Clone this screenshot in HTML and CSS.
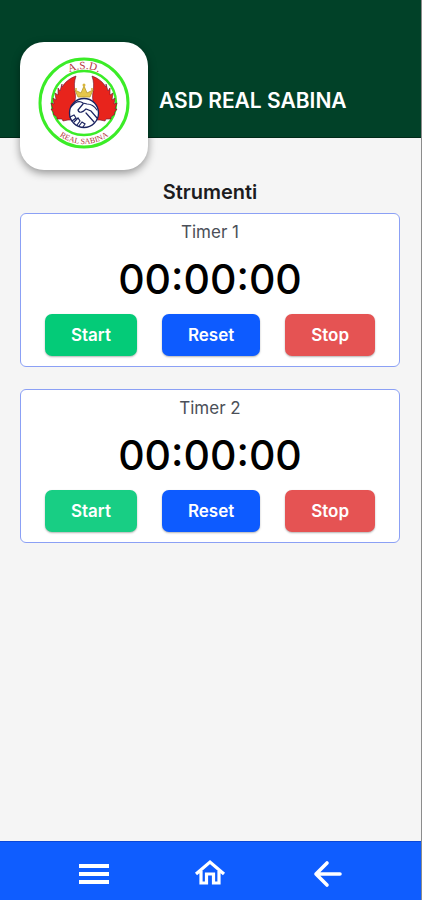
FILE: index.html
```html
<!DOCTYPE html>
<html lang="it">
<head>
    <meta charset="UTF-8">
    <meta name="viewport" content="width=device-width, initial-scale=1.0">
    <title>ASD Real Sabina - Strumenti</title>
    <link rel="stylesheet" href="styles.css">
</head>
<body>

    <header class="header">
        <div class="logo-card">
            <svg class="logo" viewBox="0 0 92 92" role="img" aria-label="Logo ASD Real Sabina">
                <defs>
                    <path id="arc-top" d="M12 46a34 34 0 0 1 68 0"/>
                    <path id="arc-bottom" d="M5 46a41 41 0 0 0 82 0"/>
                </defs>
                <circle cx="46" cy="46" r="44" fill="#fff" stroke="#3bec27" stroke-width="3"/>
                <circle cx="46" cy="46" r="32" fill="#fff" stroke="#3bec27" stroke-width="2.500"/>
                <text class="logo-top"><textPath href="#arc-top" startOffset="50%">A.S.D.</textPath></text>
                <text class="logo-bottom"><textPath href="#arc-bottom" startOffset="50%">REAL SABINA</textPath></text>
                <!-- wings -->
                <g fill="#e8241c" stroke="#6b1430" stroke-width=".6">
                    <path d="M38 19c-6 2-11 6-14 11l0-3-2 7-2-3 0 7-3-2 1 7-3-2 1 6-3-1 2 6-2 0 3 4-1 1 4 3 0 2 5 0 1 2 5-1 4 0c-4-9 0-14 3-19 2-8-3-13 1-25z"/>
                    <path d="M38 19c-6 2-11 6-14 11l0-3-2 7-2-3 0 7-3-2 1 7-3-2 1 6-3-1 2 6-2 0 3 4-1 1 4 3 0 2 5 0 1 2 5-1 4 0c-4-9 0-14 3-19 2-8-3-13 1-25z" transform="translate(92 0) scale(-1 1)"/>
                </g>
                <!-- crown -->
                <path d="M40 40l-3-7 6 3 3-7 3 7 6-3-3 7z" fill="#e6c64a" stroke="#b99a28" stroke-width=".8"/>
                <circle cx="46" cy="28" r="1.500" fill="#d8b53a"/>
                <circle cx="38" cy="32" r="1" fill="#d8b53a"/>
                <circle cx="54" cy="32" r="1" fill="#d8b53a"/>
                <!-- handshake -->
                <circle cx="46" cy="56" r="14.500" fill="#fff" stroke="#1b2360" stroke-width="1.300"/>
                <g fill="none" stroke="#1b2360" stroke-width="1.200" stroke-linecap="round">
                    <path d="M33 50c4-5 8-7 12-4l4 1c5 0 8 3 10 6M45 47l-5 6c1 4 5 2 8-1l5 2 6 7M48 56l8 9"/>
                    <path d="M32 60l4-2 2 3-4 3M36 65l4-4 2 3-3 4M41 69l3-4 3 2-2 3"/>
                </g>
            </svg>
        </div>
        <h1 class="club-name">ASD REAL SABINA</h1>
    </header>

    <main class="content">
        <h2 class="page-title">Strumenti</h2>

        <section class="timer">
            <h3 class="timer-name">Timer 1</h3>
            <div class="timer-display">00:00:00</div>
            <div class="timer-buttons">
                <button type="button" class="btn btn-start">Start</button>
                <button type="button" class="btn btn-reset">Reset</button>
                <button type="button" class="btn btn-stop">Stop</button>
            </div>
        </section>

        <section class="timer">
            <h3 class="timer-name">Timer 2</h3>
            <div class="timer-display">00:00:00</div>
            <div class="timer-buttons">
                <button type="button" class="btn btn-start btn-start-light">Start</button>
                <button type="button" class="btn btn-reset">Reset</button>
                <button type="button" class="btn btn-stop">Stop</button>
            </div>
        </section>
    </main>

    <nav class="bottom-nav">
        <button type="button" class="nav-item" aria-label="Menu">
            <svg viewBox="0 0 32 32" fill="#fff"><path d="M1 6h30v4H1zM1 14h30v4H1zM1 22h30v4H1z"/></svg>
        </button>
        <a href="#" class="nav-item" aria-label="Home">
            <svg viewBox="0 0 32 32" fill="none" stroke="#fff" stroke-width="3.200"><path d="M2 16L16 4l14 12M7 13v12h5.500V16h7v9H25V13"/></svg>
        </a>
        <a href="#" class="nav-item" aria-label="Indietro">
            <svg viewBox="0 0 32 32" fill="none" stroke="#fff" stroke-width="3.600" stroke-linecap="round" stroke-linejoin="round"><path d="M29 16H5M16 5L5 16l11 11"/></svg>
        </a>
    </nav>

    <script>
        document.querySelectorAll(".timer").forEach(timer => {
            const display = timer.querySelector(".timer-display");
            let seconds = 0;
            let interval = null;

            function show() {
                const parts = [Math.floor(seconds / 3600), Math.floor(seconds / 60) % 60, seconds % 60];
                display.textContent = parts.map(n => String(n).padStart(2, "0")).join(":");
            }

            function stop() {
                clearInterval(interval);
                interval = null;
            }

            timer.querySelector(".btn-start").addEventListener("click", () => {
                if (interval) return;
                interval = setInterval(() => {
                    seconds++;
                    show();
                }, 1000);
            });
            timer.querySelector(".btn-stop").addEventListener("click", stop);
            timer.querySelector(".btn-reset").addEventListener("click", () => {
                stop();
                seconds = 0;
                show();
            });
        });
    </script>

</body>
</html>
```
FILE: styles.css
```css
* {
    margin: 0;
    padding: 0;
    box-sizing: border-box;
}
body {
    min-height: 100vh;
    display: flex;
    flex-direction: column;
    background: #f5f5f5;
    border-right: 1px solid #8c8c8c;
    color: #1c1c1e;
    font-family: Inter, sans-serif;
}
.header {
    display: flex;
    align-items: flex-start;
    gap: 11px;
    height: 138px;
    padding: 42px 20px 0;
    background: #014128;
    border-bottom: 1px solid #012a19;
}
.logo-card {
    display: flex;
    flex: none;
    justify-content: center;
    width: 128px;
    height: 128px;
    padding-top: 15px;
    background: white;
    border-radius: 24px;
    box-shadow: 0 3px 8px rgba(0,0,0,0.4);
}
.logo {
    width: 92px;
    height: 92px;
}
.logo-top, .logo-bottom {
    font-family: "Liberation Serif", serif;
    fill: #b3303a;
    text-anchor: middle;
}
.logo-top {
    font-size: 11px;
}
.logo-bottom {
    font-size: 8px;
}
.club-name {
    color: white;
    font-size: 21px;
    font-weight: 600;
    line-height: 26px;
    padding-top: 46px;
}
.content {
    flex: 1;
    padding: 42px 21px 22px 20px;
    text-align: center;
}
.page-title {
    font-size: 20px;
    font-weight: 600;
    line-height: 24px;
    margin-bottom: 9px;
}
.timer {
    background: white;
    border: 1px solid #8ba0f5;
    border-radius: 6px;
    padding: 6px 10px 10px;
    margin-bottom: 22px;
}
.timer-name {
    color: #4b4f58;
    font-size: 17px;
    font-weight: 400;
    line-height: 24px;
}
.timer-display {
    color: black;
    font-size: 41px;
    font-weight: 500;
    line-height: 50px;
    margin: 10px 0;
}
.timer-buttons {
    display: flex;
    justify-content: center;
    gap: 25px;
}
.btn {
    height: 42px;
    padding: 0 26px;
    border: none;
    border-radius: 7px;
    box-shadow: 0 1px 2px rgba(0,0,0,0.3);
    color: white;
    font-family: inherit;
    font-size: 17px;
    font-weight: 600;
    cursor: pointer;
}
.btn-start {
    background: #04cb78;
}
.btn-start-light {
    background: #18ce84;
}
.btn-reset {
    background: #0d5bff;
}
.btn-stop {
    background: #e55353;
}
.bottom-nav {
    position: sticky;
    bottom: 0;
    display: grid;
    grid-template-columns: repeat(3, 1fr);
    padding: 16px 36px 10px;
    background: #0f5dff;
    border-top: 1px solid #0a47d8;
}
.nav-item {
    display: flex;
    justify-content: center;
    background: none;
    border: none;
    cursor: pointer;
}
.nav-item svg {
    width: 32px;
    height: 32px;
}
```
